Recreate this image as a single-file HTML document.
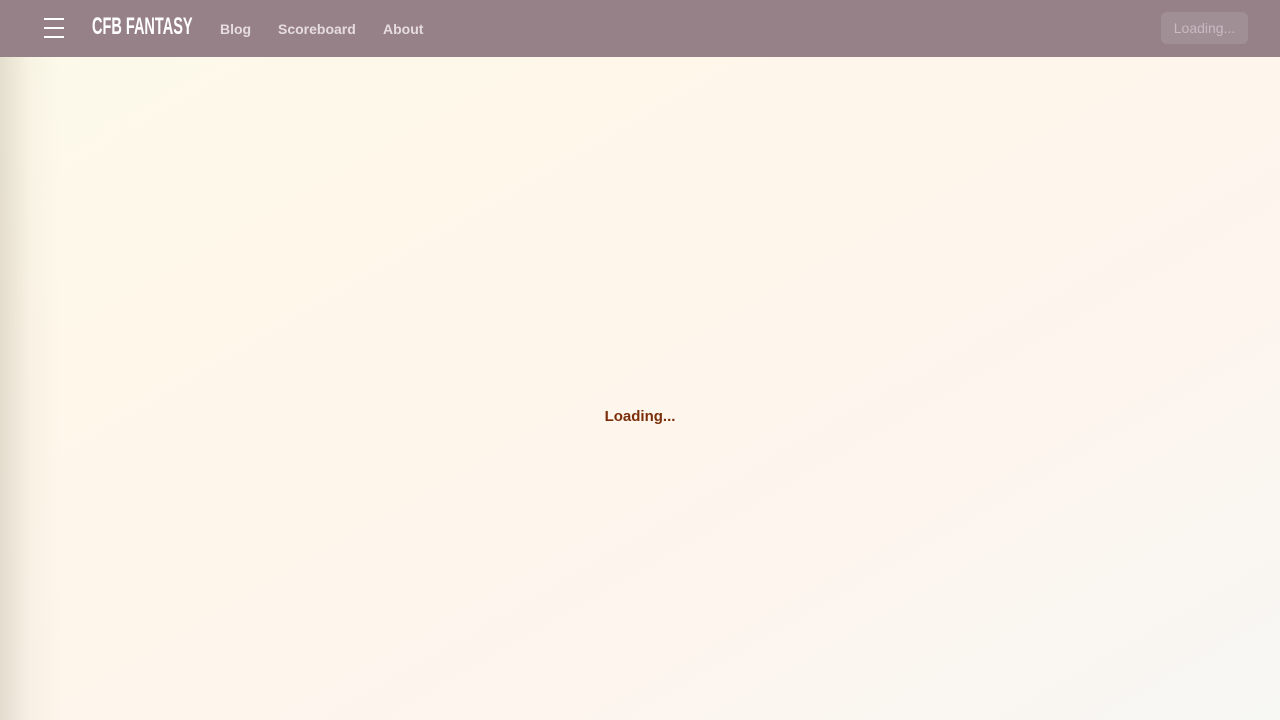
<!DOCTYPE html>
<html><head><style>
html,body{margin:0;width:1280px;height:720px;overflow:hidden;font-family:"Liberation Sans",sans-serif}
body{background:linear-gradient(150deg,#fdfaea 0%,#fef6ea 40%,#fdf5ee 70%,#f7f7f4 100%);position:relative}
.vig{position:absolute;left:0;top:0;width:60px;height:720px;background:linear-gradient(90deg,rgba(160,150,130,.28),rgba(200,190,170,.1) 50%,rgba(255,255,255,0))}
nav{position:absolute;left:0;top:0;width:1280px;height:57px;background:#978189}
.hb{position:absolute;left:44px;top:18px;width:20px}
.hb i{display:block;height:2px;background:#fff;margin-bottom:7px}
.logo{position:absolute;left:92px;top:13px;color:#fff;font-family:"Liberation Sans Narrow","Liberation Sans",sans-serif;font-weight:bold;font-size:24px;transform:scaleX(.605);transform-origin:left;white-space:nowrap}
.lk{position:absolute;top:21px;color:#e6dce0;font-size:14px;font-weight:bold}
.btn{position:absolute;left:1161px;top:12px;width:87px;height:32px;border-radius:6px;background:#a18f96;color:#c8bac0;font-size:14px;line-height:32px;text-align:center}
.ld{position:absolute;top:408px;left:0;width:1280px;text-align:center;color:#7a2e0a;font-weight:bold;font-size:15px}
</style></head><body>
<div class="vig"></div>
<nav>
<div class="hb"><i></i><i></i><i></i></div>
<div class="logo">CFB FANTASY</div>
<div class="lk" style="left:220px">Blog</div>
<div class="lk" style="left:278px">Scoreboard</div>
<div class="lk" style="left:383px">About</div>
<div class="btn">Loading...</div>
</nav>
<div class="ld">Loading...</div>
</body></html>
